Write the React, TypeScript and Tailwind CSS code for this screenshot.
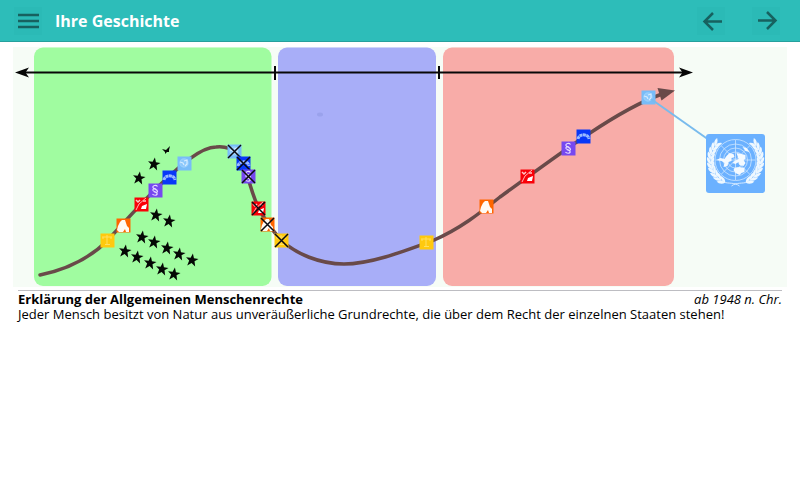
import type { ReactNode } from "react";

const CURVE =
  "M40 275C64 270 88 260 107 241C127 219 146 198 163 182C178 168 200 147 216 147C234 145 242 157 247 174C254 200 259 215 281 240C296 254 320 264 344 264C370 264 402 252 432 241C460 229 480 213 500 197C540 168 570 146 590 133C620 113 640 102 662 94";

const STARS: [number, number][] = [
  [154, 164], [139, 178], [156, 215], [169, 221],
  [142, 237], [154, 242], [167, 248], [179, 254], [192, 260],
  [125, 251], [137, 257], [150, 263], [162, 269], [174, 274],
];

type Kind = "pillar" | "flame" | "torn" | "law" | "arch" | "globe";

const COLORS: Record<Kind, string> = {
  pillar: "#ffc90e",
  flame: "#ff6600",
  torn: "#f90008",
  law: "#7648f0",
  arch: "#0838f8",
  globe: "#78bcf8",
};

const EVENTS: { kind: Kind; x: number; y: number; crossed?: boolean }[] = [
  { kind: "pillar", x: 107, y: 240 },
  { kind: "flame", x: 123, y: 225 },
  { kind: "torn", x: 141, y: 204 },
  { kind: "law", x: 155, y: 190 },
  { kind: "arch", x: 169, y: 177 },
  { kind: "globe", x: 184, y: 163 },
  { kind: "globe", x: 234, y: 151, crossed: true },
  { kind: "arch", x: 243, y: 163, crossed: true },
  { kind: "law", x: 248, y: 176, crossed: true },
  { kind: "torn", x: 258, y: 208, crossed: true },
  { kind: "flame", x: 267, y: 224, crossed: true },
  { kind: "pillar", x: 281, y: 240, crossed: true },
  { kind: "pillar", x: 426, y: 242 },
  { kind: "flame", x: 486, y: 206 },
  { kind: "torn", x: 527, y: 176 },
  { kind: "law", x: 568, y: 148 },
  { kind: "arch", x: 583, y: 136 },
  { kind: "globe", x: 648, y: 97 },
];

const GLYPHS: Record<Kind, ReactNode> = {
  pillar: (
    <path d="M-5-3H5M-4-1L-4-3M4-1L4-3M0-5V4M-2 4.500H3" stroke="#ffe05f" strokeWidth="1" fill="none" />
  ),
  flame: <path d="M-6 5L-5 1L-3-3L-1-5L2-5L3-2L4 1L6 3L6 7L3 7L2 4L0 7L-4 7Z" fill="#fffaf4" />,
  torn: (
    <g>
      <path d="M-5 6L-2 0L5-6" stroke="#ffb4b4" strokeWidth="1" fill="none" />
      <path d="M-5-4L-3-2L-1-4M2-3H5" stroke="#ffc4c4" strokeWidth="1.500" fill="none" />
      <path d="M1 2L6 0L5 5L0 5Z" fill="#ffffff" />
    </g>
  ),
  law: (
    <path
      d="M2.500-3.500C1-5.500-2.500-4.500-2-2.500C-1.500-1 2.500-.5 2.500 1.300C2.500 3-1 2.600-1 1M1 -1C-1-2-2.500-.5-2 .5C-1 2 2.500 2 2.200 4C1.800 5.800-1.500 5.500-2.500 4"
      stroke="#e4daff"
      strokeWidth="1.200"
      fill="none"
    />
  ),
  arch: (
    <path d="M-5 3C-4.500-2.500 5.500-2.500 6 3" stroke="#9abaff" strokeWidth="3" strokeDasharray="3 .4" fill="none" />
  ),
  globe: (
    <g>
      <circle r="4" fill="#8cc8fb" stroke="#98cefc" strokeWidth="1.500" />
      <path d="M-4-1L-1 0L0 2M0-2L3-3L3 1L1 3" stroke="#d4ebff" strokeWidth="1.200" fill="none" />
    </g>
  ),
};

const LEAVES = [-38, -27, -16, -5, 6, 17, 28, 39, 50, 61];

function Wreath() {
  return (
    <g fill="#eff8ff">
      <path d="M-17-17C-28-5-27 14-12 22C-7 24-1 22 4 26" fill="none" stroke="#eff8ff" strokeWidth=".8" />
      {LEAVES.map((angle) => (
        <g key={angle} transform={`rotate(${-angle})`}>
          <path d="M-25 2C-28 0-29-3-28-6C-25-4-24-1-25 2Z" />
          <path d="M-25 2C-25-1-24-4-21-5C-21-2-22 1-25 2Z" />
        </g>
      ))}
    </g>
  );
}

function Emblem() {
  return (
    <g>
      <rect x="706" y="134" width="59" height="59" rx="3" fill="#6bb1ff" />
      <g transform="translate(735.5 160)">
        <g fill="none" stroke="#cde6ff" strokeWidth=".8">
          <circle r="20.500" />
          <circle r="16" />
          <circle r="12" />
          <circle r="8" />
          <path d="M-20 0H20M0-20V20M-14-14L14 14M14-14L-14 14" />
        </g>
        <g fill="#f4faff">
          <path d="M-19 0L-15-2L-11-1L-9-4L-6-7L-2-6L-1-3L-4-2L-4 1L-7 2L-8 6L-12 7L-11 3L-14 1Z" />
          <path d="M1-7L6-6L10-5L10-1L8 0L10 3L8 6L4 5L3 2L0 4L-3 3L-1 1L3-1L2-4Z" />
          <path d="M-1 8L4 7L9 8L9 12L6 13L4 15L0 13L-2 10Z" />
          <path d="M7-13L11-12L14-8L10-9Z" />
        </g>
        <Wreath />
        <g transform="scale(-1 1)">
          <Wreath />
        </g>
      </g>
    </g>
  );
}

function Timeline() {
  return (
    <svg viewBox="0 0 774 240" className="block w-full bg-[#f6fcf6]" role="img" aria-label="Zeitstrahl der Menschenrechte">
      <g transform="translate(-13 -47)">
        <rect x="34" y="47.500" width="237.500" height="238.500" rx="9" fill="#a0fca0" />
        <rect x="278" y="47.500" width="158" height="238.500" rx="9" fill="#a8aef8" />
        <rect x="443" y="47.500" width="231" height="238.500" rx="9" fill="#f8aca8" />
        <ellipse cx="320" cy="114.500" rx="3" ry="2" fill="#9aa2ec" />

        <path d="M24 72.500H684" stroke="#080808" strokeWidth="2" />
        <path d="M275 66V80M439 66V79" stroke="#080808" strokeWidth="2" />
        <path d="M15 72.500L29 67.500L25.500 72.500L29 77.500Z" fill="#050505" />
        <path d="M693 72.500L679 67.500L682.500 72.500L679 77.500Z" fill="#050505" />

        <path d={CURVE} fill="none" stroke="#694a49" strokeWidth="3.500" strokeLinecap="round" />
        <path d="M657.500 88L675 90.500L661.500 100.500Z" fill="#694a49" />

        {STARS.map(([x, y]) => (
          <path
            key={`${x}-${y}`}
            transform={`translate(${x} ${y}) rotate(8)`}
            d="M0-6.500L1.700-2L6.300-2L2.700 1L4 6L0 3L-4 6L-2.700 1L-6.300-2L-1.700-2Z"
            fill="#050805"
          />
        ))}
        <path d="M162 149L166 150L170 146L169 150L169 152L167 152L165 154L165 152Z" fill="#050805" />

        {EVENTS.map(({ kind, x, y, crossed }) => (
          <g key={`${kind}-${x}`} transform={`translate(${x} ${y})`}>
            <rect x="-6.500" y="-6.500" width="14" height="14" fill={COLORS[kind]} />
            {GLYPHS[kind]}
            {crossed && <path d="M-6-6L7 7M7-6L-6 7" stroke="#0b0b12" strokeWidth="1.500" />}
          </g>
        ))}

        <path d="M651 99L709 140" stroke="#79bbed" strokeWidth="2" />
        <Emblem />
      </g>
    </svg>
  );
}

function HeaderButton({ label, children }: { label: string; children: ReactNode }) {
  return (
    <button type="button" aria-label={label} className="size-7 bg-[#2bbab6] text-[#17615f]">
      <svg viewBox="0 0 28 28" className="size-7" fill="none" stroke="currentColor" strokeWidth="2.500">
        {children}
      </svg>
    </button>
  );
}

export default function App() {
  return (
    <div className="min-h-screen bg-white font-['Open_Sans',sans-serif] text-black">
      <header className="flex h-[42px] items-center border-b border-[#26a09d] bg-[#2dbdb9] pr-5 pl-[14px]">
        <HeaderButton label="Menü">
          <path d="M4 8H25M4 14H25M4 20H25" />
        </HeaderButton>
        <h1 className="ml-[13px] flex-1 text-base font-bold text-white">Ihre Geschichte</h1>
        <nav className="flex gap-[27px]" aria-label="Ereignisse">
          <HeaderButton label="Zurück">
            <path d="M25 14.500H8M16 6L7.500 14.500L16 23" />
          </HeaderButton>
          <HeaderButton label="Weiter">
            <path d="M6 13.500H23M15 5L23.500 13.500L15 22" />
          </HeaderButton>
        </nav>
      </header>
      <main className="px-[13px] pt-[5px]">
        <Timeline />
        <article className="mx-[5px] mt-[3px] border-t border-[#bdbdc2] pt-px text-[13px] leading-[15px]">
          <div className="flex justify-between">
            <h2 className="font-bold">Erklärung der Allgemeinen Menschenrechte</h2>
            <p className="italic">ab 1948 n. Chr.</p>
          </div>
          <p>Jeder Mensch besitzt von Natur aus unveräußerliche Grundrechte, die über dem Recht der einzelnen Staaten stehen!</p>
        </article>
      </main>
    </div>
  );
}
